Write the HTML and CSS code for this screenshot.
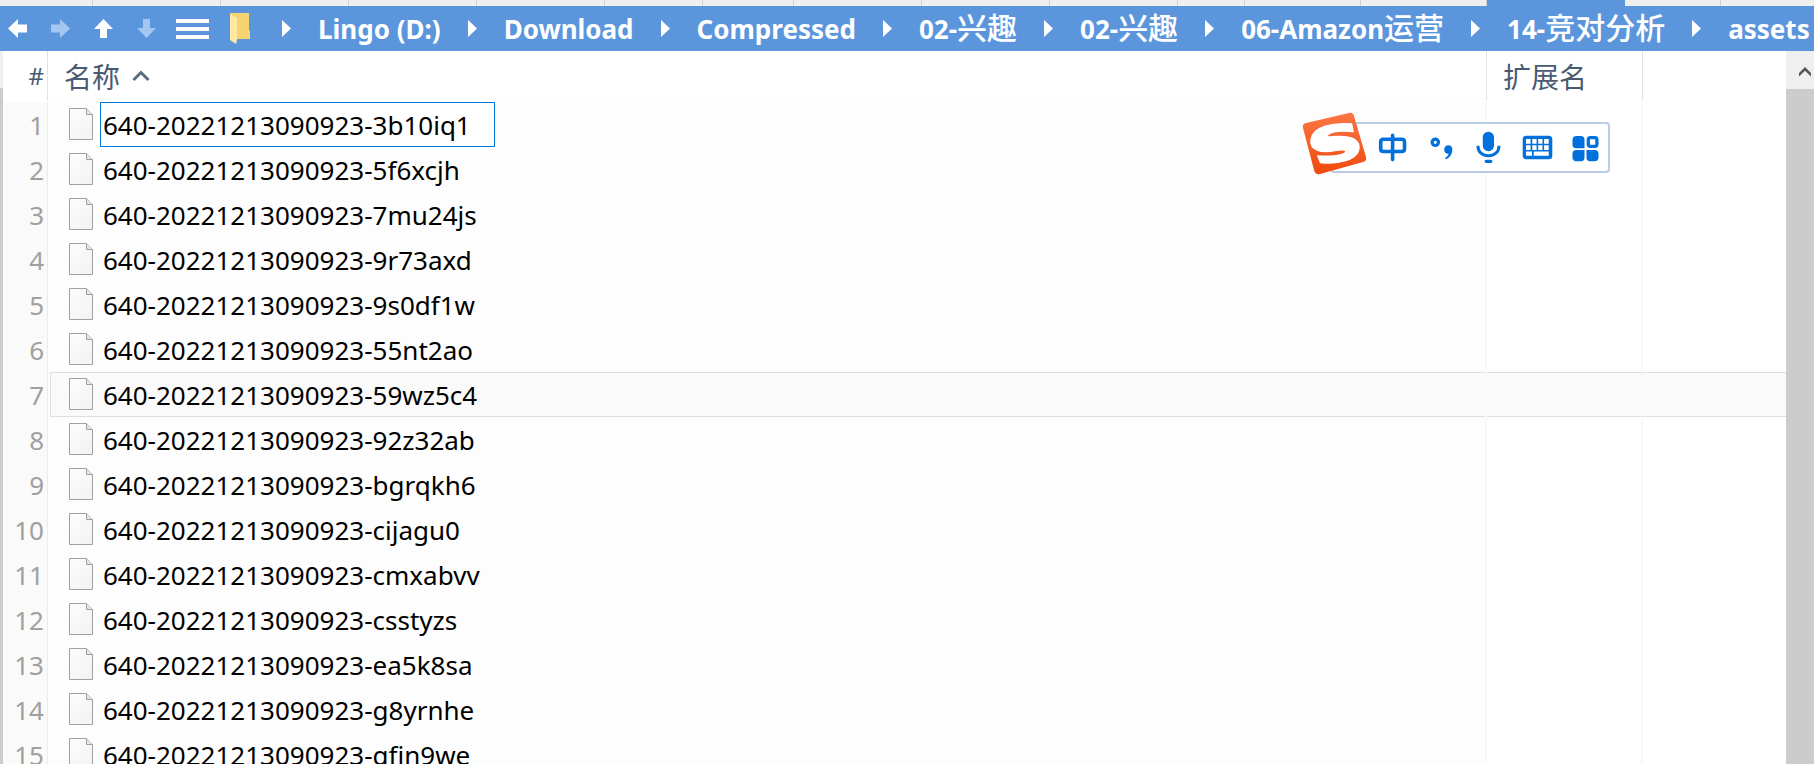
FILE: index.html
```html
<!DOCTYPE html>
<html lang="zh-CN">
<head>
<meta charset="utf-8">
<title>assets</title>
<link rel="stylesheet" href="styles.css">
</head>
<body>
<svg class="defs" aria-hidden="true">
  <linearGradient id="paper" x1="0" y1="0" x2="1" y2="1"><stop offset="0" stop-color="#fdfdfd"/><stop offset="1" stop-color="#f0f2f4"/></linearGradient>
  <symbol id="file" viewBox="0 0 24 32">
    <path d="M.5.5H17.5L23.5 6.5V31.5H.5Z" fill="url(#paper)" stroke="#a0a0a0"/>
    <path d="M17.5.5V6.5H23.5" fill="#e6e6e6" stroke="#a0a0a0"/>
  </symbol>
  <symbol id="sep" viewBox="0 0 9 17"><path d="M0 0L9 8.5L0 17Z" fill="#fff"/></symbol>
</svg>
<div class="tabs" aria-hidden="true">
  <i class="w93"></i><i class="w128"></i><i class="w128"></i><i class="w128"></i><i class="w128"></i><i class="w98"></i><i class="w91"></i><i class="w128"></i><i class="w128"></i><i class="w128"></i><i class="w67"></i><i class="w116"></i><i class="w126"></i><i class="w138 active"></i><i class="w96"></i>
</div>
<nav class="bar">
  <button aria-label="后退"><svg width="20" height="20" viewBox="0 0 20 20"><path d="M0 9.500L10 0V5.500H19V13.500H10V19Z"/></svg></button>
  <button class="dim" aria-label="前进"><svg width="20" height="20" viewBox="0 0 20 20"><path d="M19 9.500L9 0V5.500H0V13.500H9V19Z"/></svg></button>
  <button aria-label="向上"><svg width="20" height="20" viewBox="0 0 20 20"><path d="M9.500 0L19 10H13V19H6V10H0Z"/></svg></button>
  <button class="dim" aria-label="向下"><svg width="20" height="20" viewBox="0 0 20 20"><path d="M9.500 19L19 9H13V0H6V9H0Z"/></svg></button>
  <button class="menu" aria-label="菜单"><svg width="33" height="20" viewBox="0 0 33 20"><path d="M0 0H33V4H0ZM0 8H33V12H0ZM0 16H33V20H0Z"/></svg></button>
  <svg class="folder" width="20" height="31" viewBox="0 0 20 31"><path d="M0 0H19V17L20 18V26H6Z" fill="#f6d570"/><path d="M0 1L7 5V27L6 31L0 27Z" fill="#ffe9a2"/></svg>
  <ol class="crumbs">
    <li><svg><use href="#sep"/></svg><a href="#">Lingo (D:)</a></li>
    <li><svg><use href="#sep"/></svg><a href="#">Download</a></li>
    <li><svg><use href="#sep"/></svg><a href="#">Compressed</a></li>
    <li><svg><use href="#sep"/></svg><a href="#">02-<span>兴趣</span></a></li>
    <li><svg><use href="#sep"/></svg><a href="#">02-<span>兴趣</span></a></li>
    <li><svg><use href="#sep"/></svg><a href="#">06-Amazon<span>运营</span></a></li>
    <li><svg><use href="#sep"/></svg><a href="#">14-<span>竞对分析</span></a></li>
    <li><svg><use href="#sep"/></svg><a href="#">assets</a></li>
  </ol>
</nav>
<div class="pane">
  <div class="edge"></div>
  <main class="list">
    <table>
      <colgroup><col class="num"><col><col class="ext"><col class="rest"></colgroup>
      <thead><tr><th><div>#</div></th><th><div>名称<svg width="18" height="12" viewBox="0 0 18 12"><path d="M1.500 10L9 2.500L16.500 10" fill="none" stroke="#5a6b80" stroke-width="3"/></svg></div></th><th><div>扩展名</div></th><th></th></tr></thead>
      <tbody>
        <tr><td>1</td><td><div class="name"><svg><use href="#file"/></svg><input aria-label="名称" value="640-20221213090923-3b10iq1"></div></td><td></td><td></td></tr>
        <tr><td>2</td><td><div class="name"><svg><use href="#file"/></svg><span>640-20221213090923-5f6xcjh</span></div></td><td></td><td></td></tr>
        <tr><td>3</td><td><div class="name"><svg><use href="#file"/></svg><span>640-20221213090923-7mu24js</span></div></td><td></td><td></td></tr>
        <tr><td>4</td><td><div class="name"><svg><use href="#file"/></svg><span>640-20221213090923-9r73axd</span></div></td><td></td><td></td></tr>
        <tr><td>5</td><td><div class="name"><svg><use href="#file"/></svg><span>640-20221213090923-9s0df1w</span></div></td><td></td><td></td></tr>
        <tr><td>6</td><td><div class="name"><svg><use href="#file"/></svg><span>640-20221213090923-55nt2ao</span></div></td><td></td><td></td></tr>
        <tr class="hover"><td>7</td><td><div class="name"><svg><use href="#file"/></svg><span>640-20221213090923-59wz5c4</span></div></td><td></td><td></td></tr>
        <tr><td>8</td><td><div class="name"><svg><use href="#file"/></svg><span>640-20221213090923-92z32ab</span></div></td><td></td><td></td></tr>
        <tr><td>9</td><td><div class="name"><svg><use href="#file"/></svg><span>640-20221213090923-bgrqkh6</span></div></td><td></td><td></td></tr>
        <tr><td>10</td><td><div class="name"><svg><use href="#file"/></svg><span>640-20221213090923-cijagu0</span></div></td><td></td><td></td></tr>
        <tr><td>11</td><td><div class="name"><svg><use href="#file"/></svg><span>640-20221213090923-cmxabvv</span></div></td><td></td><td></td></tr>
        <tr><td>12</td><td><div class="name"><svg><use href="#file"/></svg><span>640-20221213090923-csstyzs</span></div></td><td></td><td></td></tr>
        <tr><td>13</td><td><div class="name"><svg><use href="#file"/></svg><span>640-20221213090923-ea5k8sa</span></div></td><td></td><td></td></tr>
        <tr><td>14</td><td><div class="name"><svg><use href="#file"/></svg><span>640-20221213090923-g8yrnhe</span></div></td><td></td><td></td></tr>
        <tr><td>15</td><td><div class="name"><svg><use href="#file"/></svg><span>640-20221213090923-gfjn9we</span></div></td><td></td><td></td></tr>
      </tbody>
    </table>
  </main>
  <div class="scroll"><button aria-label="向上滚动"><svg width="12" height="10" viewBox="0 0 12 10"><path d="M0 6L6 0L12 6V9.500L6 3.800L0 9.500Z" fill="#555"/></svg></button><div class="thumb"></div></div>
</div>
<div class="ime">
  <svg class="logo" width="66" height="64" viewBox="0 0 66 64">
    <linearGradient id="orange" x1="0" y1="0" x2="0" y2="1"><stop offset="0" stop-color="#fb7645"/><stop offset="1" stop-color="#f04a0c"/></linearGradient>
    <path d="M4 11L47 1Q51 0 52 4L64 45Q65 49 61 50L18 62Q13 63 12 58L1 16Q0 12 4 11Z" fill="url(#orange)"/>
    <path d="M49.500 12C32 10.500 10.500 14 9 28C8 39 20 41 33 38.500C42 37 45 38 43.500 40.500C41 43.500 29 45 16 44L18.500 50.500C36 52.500 57 48 57 35C56.500 25 45 24 34 24.500C26 25.500 24 24.500 26 22.500C30 19.500 39 18.500 51 19.500Z" fill="#fff" stroke="#fff" stroke-width="1.500"/>
  </svg>
  <button aria-label="中文"><svg><path d="M12.700 18Q12.700 15.200 15.500 15.200H33.700Q36.500 15.200 36.500 18V24.700Q36.500 27.500 33.700 27.500H15.500Q12.700 27.500 12.700 24.700ZM24.600 11.300V35.600" fill="none" stroke="#0071dc" stroke-width="3.600" stroke-linecap="round"/></svg></button>
  <button aria-label="标点"><svg><circle cx="19.300" cy="18.300" r="3.200" fill="none" stroke="#0071dc" stroke-width="3.200"/><path d="M32.300 21.200C35 21.200 36.500 23 36.400 25.800C36.200 30.500 33.500 34 29.600 35.300L29 34C31 33 32.300 31.500 32.600 29.800C30 30 28.200 28 28.200 25.400C28.200 23 30 21.200 32.300 21.200Z"/></svg></button>
  <button aria-label="语音"><svg><rect x="18.800" y="7.700" width="11.200" height="19.500" rx="5.600"/><path d="M14 21.700V22.500C14 28 18.500 31.800 24.400 31.800S34.900 28 34.900 22.500V21.700" fill="none" stroke="#0071dc" stroke-width="3"/><rect x="20.600" y="35.700" width="7.800" height="3.300" rx="1.600"/></svg></button>
  <button aria-label="键盘"><svg><rect x="10.700" y="11.700" width="29.600" height="23.600" rx="3.500"/><path d="M14 15h4.600v4.700H14zM20.300 15h4.300v4.700h-4.300zM26.200 15h4.300v4.700h-4.300zM32.100 15h4.600v4.700h-4.600zM14 21.300h4.600v4.700H14zM20.300 21.300h4.300v4.700h-4.300zM26.200 21.300h4.300v4.700h-4.300zM32.100 21.300h4.600v4.700h-4.600zM14 27.600h6v4.100H14zM21.700 27.600h15v4.100h-15z" fill="#fff"/></svg></button>
  <button aria-label="工具箱"><svg><path d="M16.500 12H21Q24.500 12 24.500 15.500V24.300H16Q12.500 24.300 12.500 20.500V16Q12.500 12 16.500 12ZM16.500 26H24.500V33.500Q24.500 37.200 21 37.200H16.500Q12.500 37.200 12.500 33.500V29.500Q12.500 26 16.500 26ZM26.500 26H34.500Q38.500 26 38.500 29.500V33.500Q38.500 37.200 34.500 37.200H30Q26.500 37.200 26.500 33.500Z"/><rect x="28.300" y="13.700" width="8.600" height="8.600" rx="2" fill="none" stroke="#0071dc" stroke-width="3.300"/></svg></button>
</div>
</body>
</html>
```

FILE: styles.css
```css
* { box-sizing: border-box; }

body {
  margin: 0;
  height: 100vh;
  overflow: hidden;
  display: flex;
  flex-direction: column;
  position: relative;
  background: #fff;
  color: #000;
  font-family: "Noto Sans", "Noto Sans CJK SC", sans-serif;
  font-size: 26px;
}

button {
  margin: 0;
  padding: 0;
  border: 0;
  background: none;
  display: flex;
}

.defs { position: absolute; width: 0; height: 0; }

.tabs {
  display: flex;
  flex: none;
  height: 6px;
  overflow: hidden;
  background: #efefef;
}
.tabs i { flex: none; border-right: 1px solid #d0d0d0; }
.tabs .active { background: #5b96dd; border-color: #5b96dd; }
.w67 { width: 67px; }
.w91 { width: 91px; }
.w93 { width: 93px; }
.w96 { width: 96px; }
.w98 { width: 98px; }
.w116 { width: 116px; }
.w126 { width: 126px; }
.w128 { width: 128px; }
.w138 { width: 138px; }

.bar {
  flex: none;
  height: 45px;
  padding-left: 8px;
  display: flex;
  align-items: center;
  gap: 23px;
  overflow: hidden;
  background: #5b96dd;
}
.bar button { fill: #fff; }
.bar .dim { fill: #a5c6f0; }
.bar .menu { margin-right: -2px; margin-left: -4px; }
.folder { flex: none; }

.crumbs {
  display: flex;
  gap: 27px;
  margin: 0 0 0 9px;
  padding: 0;
  list-style: none;
}
.crumbs li { display: flex; align-items: center; gap: 27px; }
.crumbs svg { width: 9px; height: 17px; }
.crumbs a {
  padding-top: 2px;
  color: #fff;
  font-weight: 700;
  line-height: 43px;
  text-decoration: none;
  white-space: nowrap;
}
.crumbs span { font-weight: 500; font-size: 30px; line-height: 1; }

.pane { flex: 1; min-height: 0; display: flex; }
.edge { width: 3px; background: #ccc; border-top: 37px solid #efefef; }
.list { flex: 1; min-width: 0; overflow: hidden; }

table { width: 100%; table-layout: fixed; border-spacing: 0; }
.num { width: 45px; }
.ext { width: 156px; }
.rest { width: 143px; }
th {
  height: 51px;
  padding: 0 0 2px;
  color: #4a5a70;
  font-weight: 400;
  text-align: left;
}
th div {
  height: 49px;
  padding-left: 16px;
  display: flex;
  align-items: center;
  gap: 12px;
  border-right: 1px solid #e2e2e2;
  font-size: 28px;
}
th:first-child div { padding: 0 3px 0 0; justify-content: flex-end; font-size: 24px; }
td { height: 45px; padding: 0; border-right: 2px solid #f3f9fe; }
td:first-child {
  padding: 2px 3px 0 0;
  border-right: 1px solid #ececec;
  background: #fafafa;
  color: #a0a0a0;
  line-height: 43px;
  text-align: right;
}
td:nth-child(2) { padding-left: 2px; background: #fdfdfd; }
td:last-child { border-right: 0; }
.name {
  height: 45px;
  padding-left: 18px;
  display: flex;
  align-items: center;
  border: 1px solid transparent;
  border-right: 0;
}
.name svg { width: 24px; height: 32px; margin-bottom: 2px; flex: none; }
.name span { padding: 2px 0 0 10px; line-height: 41px; }
.name input {
  width: 395px;
  height: 45px;
  margin-left: 7px;
  padding: 1px 2px 0;
  border: 1px solid #0078d7;
  border-radius: 0;
  background: #fff;
  color: #000;
  font: inherit;
  outline: 0;
}
.hover .name { border-color: #dedfe0; background: #fafafa; }
.hover td:nth-child(n+3) {
  background: #fafafa;
  border-top: 1px solid #dedfe0;
  border-bottom: 1px solid #dedfe0;
}

.scroll { width: 28px; display: flex; flex-direction: column; background: #efefef; }
.scroll button { height: 38px; align-items: center; justify-content: center; padding: 4px 0 0 9px; }
.thumb { flex: 1; background: #ccc; }

/* input-method bar floating over the file list */
.ime {
  position: absolute;
  top: 122px;
  right: 204px;
  height: 51px;
  padding-left: 36px;
  display: flex;
  border: 2px solid #b9cce4;
  border-radius: 4px;
  background: #fff;
  fill: #0071dc;
}
.ime button svg { width: 48px; height: 46px; }
.logo { position: absolute; left: -30px; top: -12px; }
```
